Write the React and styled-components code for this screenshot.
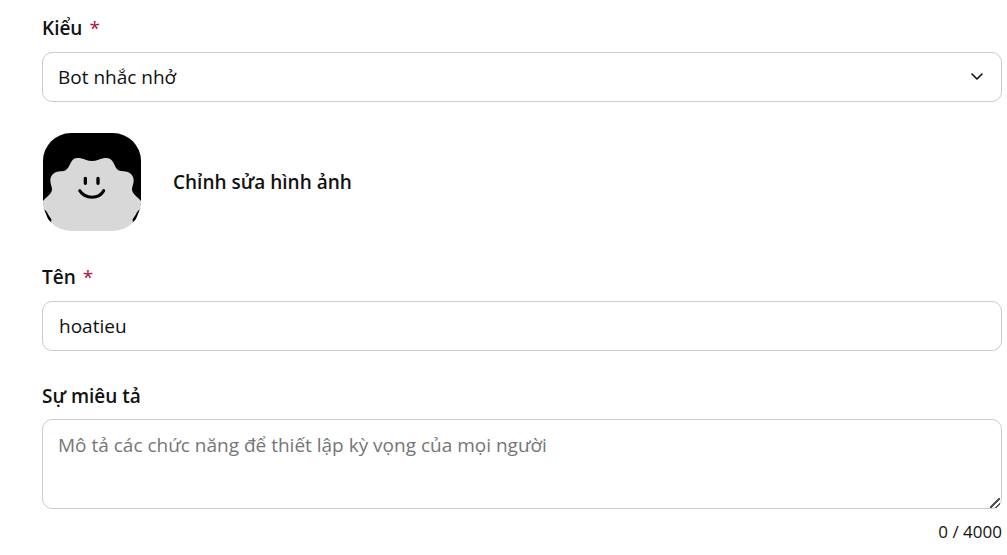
import React, { useState } from 'react';
import styled, { createGlobalStyle } from 'styled-components';

const MAX_LENGTH = 4000;

const GlobalStyle = createGlobalStyle`
    * {
        box-sizing: border-box;
    }
    body {
        margin: 0;
        background: #fff;
        color: #111;
        font-family: 'Open Sans', 'Noto Sans', sans-serif;
        font-size: 19px;
        line-height: 28px;
    }
    button, input, select, textarea {
        font: inherit;
        color: inherit;
    }
`;

const Form = styled.form`
    display: flex;
    flex-direction: column;
    gap: 31px;
    padding: 14px 5px 8px 42px;
`;

const Field = styled.div`
    display: flex;
    flex-direction: column;
    gap: ${({ $gap }) => $gap || 10}px;
`;

const Label = styled.label`
    font-weight: 600;
`;

const Required = styled.span`
    margin-left: 7px;
    color: #b10e3c;
    font-weight: 400;
`;

const Control = styled.input`
    display: block;
    width: 100%;
    height: 50px;
    margin: 0;
    padding: 0 16px;
    border: 1px solid #ccc;
    border-radius: 10px;
    background: #fff;
    outline: none;
    &:focus {
        border-color: #888;
    }
`;

const SelectWrap = styled.div`
    position: relative;
`;

const Select = styled(Control)`
    padding: 0 44px 0 15px;
    appearance: none;
`;

const Chevron = styled.svg`
    position: absolute;
    top: 50%;
    right: 18px;
    width: 14px;
    height: 8px;
    margin-top: -4px;
    pointer-events: none;
`;

const TextArea = styled(Control)`
    height: 90px;
    padding: 11px 15px;
    resize: vertical;
    &::placeholder {
        color: #767676;
    }
    &::-webkit-resizer {
        background: linear-gradient(135deg, transparent 6px, #555 6px 8px, transparent 8px 10px, #555 10px 12px, transparent 12px) 4px 5px / 10px 10px no-repeat;
    }
`;

const Counter = styled.div`
    font-size: 17px;
    text-align: right;
`;

const AvatarRow = styled.div`
    display: flex;
    align-items: center;
    gap: 32px;
    padding: 0 1px 1px;
`;

const Avatar = styled.svg`
    width: 98px;
    height: 98px;
    border-radius: 28px;
`;

const EditButton = styled.button`
    padding: 0;
    border: 0;
    background: none;
    font-weight: 600;
    cursor: pointer;
`;

const BotAvatar = () => (
  <Avatar viewBox="0 0 294 294" aria-hidden="true">
    <rect width="294" height="215" fill="#000" />
    <path fill="#000" d="M2 226h40v40h-24zM292 226h-40v40h24z" />
    <path
      fill="#d8d8d8"
      d="M0 204 C12 190 27 183 27 168 C27 160 22 153 22 143 C22 126 34 116 53 115 C66 114 71 111 77 101 L85 86 C91 75 101 73 113 76 C126 79 133 84 147 84 C161 84 168 79 181 76 C194 73 204 76 210 87 L218 103 C223 112 229 114 241 115 C260 116 272 126 272 143 C272 153 267 160 267 168 C267 183 282 190 294 204 V228 C287 231 283 235 280 241 C277 248 273 253 269 259 V266 L294 268 V294 H0 V268 L25 266 V259 C21 253 17 248 14 241 C11 235 7 231 0 228 Z"
    />
    <g fill="none" stroke="#000" strokeLinecap="round">
      <path strokeWidth="10" d="M127 136v15M165 136v15" />
      <path strokeWidth="9" d="M110 173c17 26 58 26 72 0" />
    </g>
  </Avatar>
);

const BotForm = () => {
  const [type, setType] = useState('reminder');
  const [name, setName] = useState('hoatieu');
  const [description, setDescription] = useState('');

  return (
    <Form onSubmit={(e) => e.preventDefault()}>
      <Field>
        <Label htmlFor="type">Kiểu<Required>*</Required></Label>
        <SelectWrap>
          <Select as="select" id="type" value={type} onChange={(e) => setType(e.target.value)}>
            <option value="reminder">Bot nhắc nhở</option>
          </Select>
          <Chevron viewBox="0 0 14 8" aria-hidden="true">
            <path d="M2 1l5 5 5-5" fill="none" stroke="#111" strokeWidth="1.6" strokeLinecap="round" strokeLinejoin="round" />
          </Chevron>
        </SelectWrap>
      </Field>
      <AvatarRow>
        <BotAvatar />
        <EditButton type="button">Chỉnh sửa hình ảnh</EditButton>
      </AvatarRow>
      <Field>
        <Label htmlFor="name">Tên<Required>*</Required></Label>
        <Control id="name" type="text" value={name} onChange={(e) => setName(e.target.value)} />
      </Field>
      <Field $gap={9}>
        <Label htmlFor="description">Sự miêu tả</Label>
        <TextArea
          as="textarea"
          id="description"
          maxLength={MAX_LENGTH}
          placeholder="Mô tả các chức năng để thiết lập kỳ vọng của mọi người"
          value={description}
          onChange={(e) => setDescription(e.target.value)}
        />
        <Counter>{description.length} / {MAX_LENGTH}</Counter>
      </Field>
    </Form>
  );
};

const App = () => (
  <>
    <GlobalStyle />
    <BotForm />
  </>
);

export default App;
